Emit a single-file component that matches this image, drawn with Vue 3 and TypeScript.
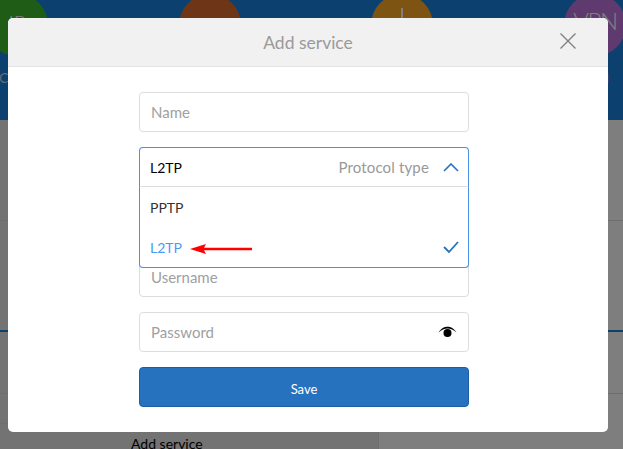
<template>
  <div class="page">
    <div class="topbar">
      <div v-for="item in navItems" :key="item.label" class="nav-item">
        <div class="circle" :class="item.cls">
          <span v-if="item.short">{{ item.short }}</span>
          <i v-else class="plug"></i>
        </div>
        <div class="nav-label" :class="item.cls + '-label'">{{ item.label }}</div>
      </div>
    </div>

    <div class="main">
      <div class="row row-a"></div>
      <div class="row row-b"></div>
      <div class="row row-c"></div>
      <div class="row-d">
        <div class="left-col">
          <div class="left-top"></div>
          <div class="add-link">Add service</div>
        </div>
      </div>
    </div>

    <!-- Modal -->
    <div class="modal-overlay">
      <div class="modal-content">
        <div class="modal-header">
          <span class="modal-title">Add service</span>
          <button class="btn-close" type="button" aria-label="Close">
            <svg width="16" height="16" viewBox="0 0 16 16">
              <path d="M0.5 0.5 L15.5 15.5 M15.5 0.5 L0.5 15.5" fill="none" stroke="#808080" stroke-width="1.4" />
            </svg>
          </button>
        </div>

        <form class="form" @submit.prevent>
          <input class="field" type="text" placeholder="Name" />

          <div class="select-wrap">
            <div class="select-head field">
              <span class="select-value">{{ protocol }}</span>
              <span class="select-hint">Protocol type</span>
              <svg class="chevron" width="16" height="9" viewBox="0 0 16 9">
                <path d="M1 8 L8 1 L15 8" fill="none" stroke="#2672bf" stroke-width="1.6" />
              </svg>
            </div>
            <div class="select-menu">
              <div class="option">PPTP</div>
              <div class="option active">
                <span>L2TP</span>
                <svg class="arrow" width="62" height="10" viewBox="0 0 62 10">
                  <path d="M0 5 L16 0 L14 3.8 L62 3.8 L62 6.2 L14 6.2 L16 10 Z" fill="#f00" />
                </svg>
                <svg class="check" width="16" height="12" viewBox="0 0 16 12">
                  <path d="M1 6 L6 11 L15 1" fill="none" stroke="#2672bf" stroke-width="1.8" />
                </svg>
              </div>
            </div>
          </div>

          <div class="field"></div>
          <input class="field" type="text" placeholder="Username" />

          <div class="field password">
            <input type="password" placeholder="Password" />
            <svg width="19" height="12" viewBox="0 0 19 12">
              <path d="M0.5 6.5 C4 1.5 6.5 0.8 9.5 0.8 C12.5 0.8 15 1.5 18.5 6.5 C15.5 3.6 12.5 2.4 9.5 2.4 C6.5 2.4 3.5 3.6 0.5 6.5 Z" fill="#000" />
              <circle cx="9.5" cy="7" r="4" fill="#000" />
            </svg>
          </div>

          <button type="submit" class="btn-save">Save</button>
        </form>
      </div>
    </div>
  </div>
</template>

<script setup lang="ts">
import { ref } from 'vue';

const protocol = ref('L2TP');
const navItems = [
  { label: 'Cloud', short: 'IP', cls: 'green' },
  { label: 'DDNS', short: 'DNS', cls: 'brown' },
  { label: 'Port', short: '', cls: 'orange' },
  { label: 'VPN', short: 'VPN', cls: 'purple' },
];
</script>

<style>
html, body { margin: 0; overflow: hidden; }
</style>

<style scoped>
.page { position: relative; width: 623px; height: 449px; overflow: hidden; font-family: Lato, "Liberation Sans", sans-serif; }

/* Barra superior */
.topbar { height: 120px; background: #1780de; display: flex; justify-content: space-between; box-sizing: border-box; overflow: hidden; margin: 0 -3px 0 -14px; }
.nav-item { width: 62px; margin-top: -6px; display: flex; flex-direction: column; align-items: center; }
.circle { width: 62px; height: 62px; border-radius: 50%; color: #fff; font-size: 20px; font-weight: 300; display: flex; justify-content: center; padding-top: 15px; box-sizing: border-box; line-height: 26px; }
.green { background: #3fbb2e; }
.brown { background: #dc6a2e; padding-top: 21px; }
.orange { background: #fba924; }
.purple { background: #bc74dc; font-size: 24px; letter-spacing: -1.5px; padding-top: 14px; }
.plug { display: block; width: 2px; height: 16px; margin-top: -1px; background: #fff; }
.nav-label { margin-top: 12px; font-size: 14px; line-height: 20px; color: #c8d8e8; }
.purple-label { color: #fba924; }

/* Fondo */
.main { height: 329px; background: linear-gradient(90deg, #e6e6e6 378px, #fcfcfc 378px); }
.row-a { height: 100px; border-bottom: 1px solid #ddd; }
.row-b { height: 109px; border-bottom: 2px solid #1780de; }
.row-c { height: 61px; border-bottom: 1px solid #ddd; }
.left-col { width: 378px; border-right: 1px solid #ddd; height: 55px; }
.left-top { height: 29px; border-bottom: 1px solid #ddd; }
.add-link { padding: 11px 0 0 131px; font-size: 14px; line-height: 18px; color: #000; }

/* Modal */
.modal-overlay { position: absolute; top: 0; left: 0; width: 100%; height: 100%; background: rgba(0,0,0,0.5); padding: 18px 15px 0 8px; box-sizing: border-box; }
.modal-content { width: 600px; height: 414px; background: #fff; border-radius: 5px; overflow: hidden; }
.modal-header { height: 49px; box-sizing: border-box; background: #f1f1f1; border-bottom: 1px solid #e4e4e4; display: flex; align-items: center; justify-content: center; position: relative; }
.modal-title { font-size: 17.5px; color: #999; }
.btn-close { position: absolute; right: 32px; top: 15px; width: 16px; height: 16px; padding: 0; border: none; background: none; display: block; }
.btn-close svg { display: block; }

.form { width: 330px; margin: 25px 0 0 131px; display: flex; flex-direction: column; gap: 15px; }
.field { height: 40px; box-sizing: border-box; width: 100%; border: 1px solid #ddd; border-radius: 4px; padding: 0 11px; font: 15px Lato, "Liberation Sans", sans-serif; background: #fff; outline: none; }
input::placeholder { color: #a0a0a0; opacity: 1; }

.select-wrap { position: relative; height: 40px; }
.select-head { display: flex; align-items: center; border-color: #4a90e2; border-radius: 4px 4px 0 0; border-bottom: 1px solid #ddd; padding: 0 9px 0 10px; position: relative; z-index: 2; }
.select-value { color: #000; font-size: 14px; }
.select-hint { margin-left: auto; color: #999; letter-spacing: 0.15px; }
.chevron { margin-left: 14px; }
.select-menu { position: absolute; left: 0; right: 0; top: 40px; height: 81px; box-sizing: border-box; background: #fff; border: 1px solid #4a90e2; border-top: none; border-radius: 0 0 4px 4px; z-index: 2; }
.option { height: 40px; display: flex; align-items: center; padding: 0 9px 0 10px; font-size: 14px; color: #333; }
.active { color: #4a9af5; }
.arrow { margin: 4px 0 0 8px; }
.check { margin-left: auto; }

.password { display: flex; align-items: center; padding-right: 11px; }
.password input { flex: 1; min-width: 0; border: none; outline: none; padding: 0; font: inherit; }
.btn-save { height: 40px; background: #2672bf; border: 1px solid #1a5ea6; border-radius: 4px; color: #fff; font: 13px Lato, "Liberation Sans", sans-serif; padding: 4px 0 0; }
</style>
